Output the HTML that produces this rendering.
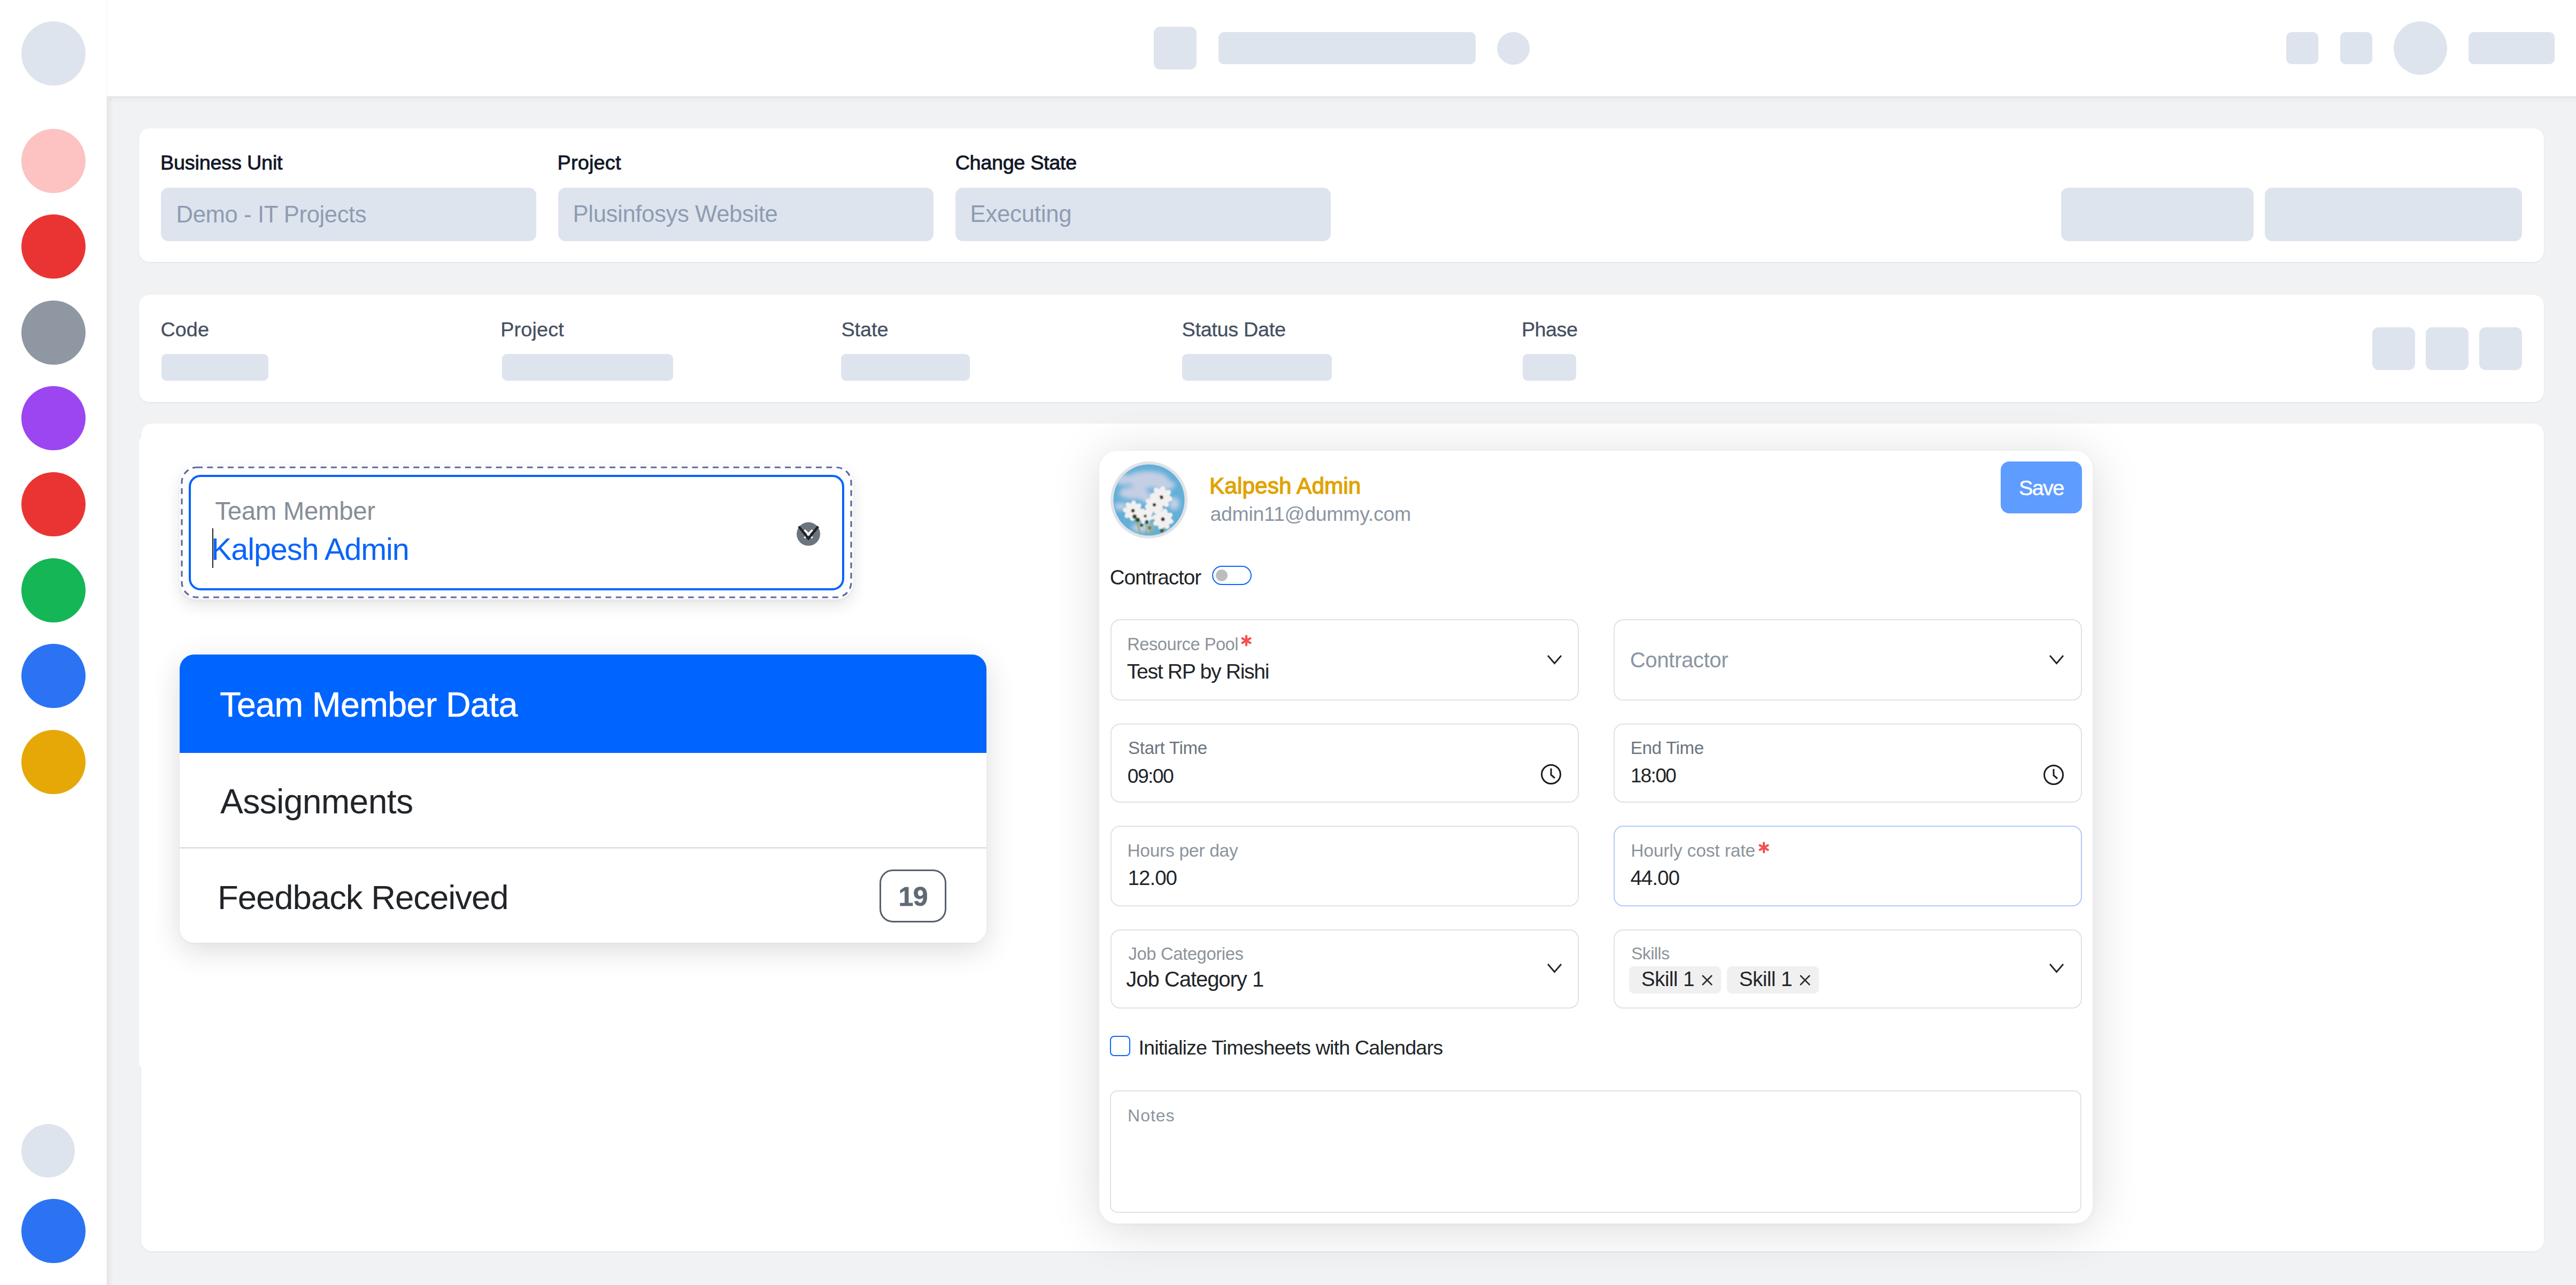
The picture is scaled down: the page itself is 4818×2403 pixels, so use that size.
<!DOCTYPE html>
<html><head><meta charset="utf-8"><title>Team Member</title>
<style>
html,body{margin:0;padding:0}
body{width:4818px;height:2403px;position:relative;overflow:hidden;background:#f1f2f4;font-family:"Liberation Sans",sans-serif}
.b{position:absolute;box-sizing:border-box}
.t{position:absolute;line-height:1;white-space:nowrap}
</style></head><body>
<div class="b" style="left:0px;top:0px;width:200px;height:2403px;background:#ffffff;border-radius:0px;border-right:1px solid #f4f4f5;"></div>
<div class="b" style="left:40px;top:40px;width:120px;height:120px;background:#dee4ed;border-radius:60px;"></div>
<div class="b" style="left:40px;top:240.5px;width:120px;height:120px;background:#fdc2c2;border-radius:60px;"></div>
<div class="b" style="left:40px;top:401.1px;width:120px;height:120px;background:#ea3434;border-radius:60px;"></div>
<div class="b" style="left:40px;top:561.7px;width:120px;height:120px;background:#8f97a3;border-radius:60px;"></div>
<div class="b" style="left:40px;top:722.3px;width:120px;height:120px;background:#9b46f1;border-radius:60px;"></div>
<div class="b" style="left:40px;top:882.9px;width:120px;height:120px;background:#ea3434;border-radius:60px;"></div>
<div class="b" style="left:40px;top:1043.5px;width:120px;height:120px;background:#14b655;border-radius:60px;"></div>
<div class="b" style="left:40px;top:1204.1px;width:120px;height:120px;background:#2b73f2;border-radius:60px;"></div>
<div class="b" style="left:40px;top:1364.7px;width:120px;height:120px;background:#e5a806;border-radius:60px;"></div>
<div class="b" style="left:40px;top:2102px;width:100px;height:100px;background:#dee4ed;border-radius:50px;"></div>
<div class="b" style="left:40px;top:2242px;width:120px;height:120px;background:#2b73f2;border-radius:60px;"></div>
<div class="b" style="left:200px;top:0px;width:4618px;height:180px;background:#ffffff;border-radius:0px;"></div>
<div class="b" style="left:200px;top:180px;width:4618px;height:3px;background:#e4e6ea;border-radius:0px;"></div>
<div class="b" style="left:200px;top:183px;width:4618px;height:9px;background:linear-gradient(rgba(0,0,0,0.03),rgba(0,0,0,0));border-radius:0px;"></div>
<div class="b" style="left:200px;top:180px;width:3px;height:2223px;background:#e4e6ea;border-radius:0px;"></div>
<div class="b" style="left:203px;top:183px;width:10px;height:2220px;background:linear-gradient(to right,rgba(0,0,0,0.03),rgba(0,0,0,0));border-radius:0px;"></div>
<div class="b" style="left:2158px;top:50px;width:80px;height:80px;background:#dee4ed;border-radius:12px;"></div>
<div class="b" style="left:2279px;top:60px;width:481px;height:60px;background:#dee4ed;border-radius:10px;"></div>
<div class="b" style="left:2800px;top:60px;width:61px;height:61px;background:#dee4ed;border-radius:30.5px;"></div>
<div class="b" style="left:4276px;top:60px;width:60px;height:60px;background:#dee4ed;border-radius:10px;"></div>
<div class="b" style="left:4377px;top:60px;width:60px;height:60px;background:#dee4ed;border-radius:10px;"></div>
<div class="b" style="left:4477px;top:40px;width:100px;height:100px;background:#dee4ed;border-radius:50px;"></div>
<div class="b" style="left:4617px;top:60px;width:161px;height:60px;background:#dee4ed;border-radius:10px;"></div>
<div class="b" style="left:260px;top:240px;width:4498px;height:250px;background:#ffffff;border-radius:20px;box-shadow:0 1px 3px rgba(0,0,0,0.06),0 1px 2px rgba(0,0,0,0.03);"></div>
<div class="b" style="left:301px;top:351px;width:702px;height:100px;background:#dee4ed;border-radius:14px;"></div>
<div class="b" style="left:1044px;top:351px;width:702px;height:100px;background:#dee4ed;border-radius:14px;"></div>
<div class="b" style="left:1787px;top:351px;width:702px;height:100px;background:#dee4ed;border-radius:14px;"></div>
<div class="b" style="left:3855px;top:351px;width:360px;height:100px;background:#dee4ed;border-radius:14px;"></div>
<div class="b" style="left:4236px;top:351px;width:481px;height:100px;background:#dee4ed;border-radius:14px;"></div>
<div class="b" style="left:260px;top:551px;width:4498px;height:201px;background:#ffffff;border-radius:20px;box-shadow:0 1px 3px rgba(0,0,0,0.06),0 1px 2px rgba(0,0,0,0.03);"></div>
<div class="b" style="left:302px;top:662px;width:200px;height:50px;background:#dee4ed;border-radius:9px;"></div>
<div class="b" style="left:939px;top:662px;width:320px;height:50px;background:#dee4ed;border-radius:9px;"></div>
<div class="b" style="left:1573px;top:662px;width:241px;height:50px;background:#dee4ed;border-radius:9px;"></div>
<div class="b" style="left:2211px;top:662px;width:280px;height:50px;background:#dee4ed;border-radius:9px;"></div>
<div class="b" style="left:2848px;top:662px;width:100px;height:50px;background:#dee4ed;border-radius:9px;"></div>
<div class="b" style="left:4437px;top:612px;width:80px;height:80px;background:#dee4ed;border-radius:12px;"></div>
<div class="b" style="left:4537px;top:612px;width:80px;height:80px;background:#dee4ed;border-radius:12px;"></div>
<div class="b" style="left:4637px;top:612px;width:80px;height:80px;background:#dee4ed;border-radius:12px;"></div>
<div class="b" style="left:263.5px;top:792px;width:4494.5px;height:1548px;background:#ffffff;border-radius:20px;box-shadow:0 1px 3px rgba(0,0,0,0.06),0 1px 2px rgba(0,0,0,0.03);"></div>
<div class="b" style="left:260px;top:814px;width:1700px;height:1186px;background:#ffffff;border-radius:14px;"></div>
<div class="b" style="left:336px;top:870px;width:1260px;height:251px;background:#ffffff;border-radius:32px;box-shadow:0 12px 28px rgba(0,0,0,0.10),0 2px 6px rgba(0,0,0,0.04);"></div>
<svg class="b" style="left:336px;top:870px" width="1260" height="251"><rect x="4" y="4" width="1252" height="243" rx="28" ry="28" fill="none" stroke="#5c69a2" stroke-width="3.2" stroke-dasharray="11 8.3"/></svg>
<div class="b" style="left:353px;top:888px;width:1226px;height:216px;background:transparent;border-radius:22px;border:4px solid #0064ff;box-sizing:border-box;"></div>
<div class="b" style="left:397px;top:988px;width:2px;height:74px;background:#222;border-radius:0px;"></div>
<svg class="b" style="left:1485px;top:972px" width="54" height="54" viewBox="0 0 54 54"><circle cx="27" cy="26.6" r="22" fill="#6c757d"/><path d="M19.5 19 L34.5 34 M34.5 19 L19.5 34" stroke="#fff" stroke-width="3.4"/><path d="M9 12.5 L27 35.2 L45.3 12.5" stroke="#1f2329" stroke-width="4.4" fill="none"/></svg>
<div class="b" style="left:336px;top:1224px;width:1509px;height:539px;background:#ffffff;border-radius:27px;box-shadow:0 14px 56px rgba(0,0,0,0.14),0 1px 4px rgba(0,0,0,0.04);overflow:hidden;"></div>
<div class="b" style="left:336px;top:1224px;width:1509px;height:184px;background:#0064ff;border-radius:0px;border-radius:27px 27px 0 0;"></div>
<div class="b" style="left:336px;top:1584px;width:1509px;height:3px;background:#dfe2e6;border-radius:0px;"></div>
<div class="b" style="left:1645px;top:1626px;width:125px;height:99px;background:transparent;border-radius:25px;border:3.5px solid #56606b;box-sizing:border-box;"></div>
<div class="b" style="left:2056px;top:843px;width:1858px;height:1445px;background:#ffffff;border-radius:34px;box-shadow:0 10px 90px rgba(0,0,0,0.15),0 2px 8px rgba(0,0,0,0.03);"></div>
<svg class="b" style="left:2076px;top:862px" width="146" height="146" viewBox="0 0 146 146"><defs><clipPath id="avc"><circle cx="73" cy="73" r="66.5"/></clipPath><filter id="blur3"><feGaussianBlur stdDeviation="4"/></filter><filter id="blur1"><feGaussianBlur stdDeviation="0.8"/></filter></defs><circle cx="73" cy="73" r="72" fill="#dfe3e7"/><g clip-path="url(#avc)"><rect width="146" height="146" fill="#63afd8"/><g filter="url(#blur3)" fill="#cfd3e6" opacity="0.9"><ellipse cx="70" cy="35" rx="40" ry="16"/><ellipse cx="45" cy="60" rx="28" ry="12"/><ellipse cx="100" cy="45" rx="22" ry="10"/><ellipse cx="25" cy="35" rx="15" ry="10"/><ellipse cx="80" cy="70" rx="25" ry="9"/><ellipse cx="20" cy="85" rx="12" ry="7"/><ellipse cx="120" cy="80" rx="10" ry="12"/><ellipse cx="60" cy="125" rx="20" ry="8"/></g><g filter="url(#blur1)"><path d="M46 104 L60 146 M52 110 L58 146 M69 114 L66 146 M83 82 L78 146 M98 70 L102 146 M74 125 L82 146" stroke="#9aa86a" stroke-width="1.6" fill="none"/><ellipse cx="106.3" cy="69.8" rx="10.9" ry="6.3" transform="rotate(10 106.3 69.8)" fill="#f2f0f1"/><ellipse cx="102.0" cy="76.6" rx="10.9" ry="6.3" transform="rotate(55 102.0 76.6)" fill="#f2f0f1"/><ellipse cx="94.2" cy="78.3" rx="10.9" ry="6.3" transform="rotate(100 94.2 78.3)" fill="#f2f0f1"/><ellipse cx="87.4" cy="74.0" rx="10.9" ry="6.3" transform="rotate(145 87.4 74.0)" fill="#f2f0f1"/><ellipse cx="85.7" cy="66.2" rx="10.9" ry="6.3" transform="rotate(190 85.7 66.2)" fill="#f2f0f1"/><ellipse cx="90.0" cy="59.4" rx="10.9" ry="6.3" transform="rotate(235 90.0 59.4)" fill="#f2f0f1"/><ellipse cx="97.8" cy="57.7" rx="10.9" ry="6.3" transform="rotate(280 97.8 57.7)" fill="#f2f0f1"/><ellipse cx="104.6" cy="62.0" rx="10.9" ry="6.3" transform="rotate(325 104.6 62.0)" fill="#f2f0f1"/><circle cx="96" cy="68" r="4.6" fill="#e9e3d0"/><circle cx="96" cy="68" r="3.6" fill="#27331a"/><ellipse cx="90.8" cy="86.5" rx="9.4" ry="5.4" transform="rotate(30 90.8 86.5)" fill="#f2f0f1"/><ellipse cx="85.3" cy="90.7" rx="9.4" ry="5.4" transform="rotate(75 85.3 90.7)" fill="#f2f0f1"/><ellipse cx="78.5" cy="89.8" rx="9.4" ry="5.4" transform="rotate(120 78.5 89.8)" fill="#f2f0f1"/><ellipse cx="74.3" cy="84.3" rx="9.4" ry="5.4" transform="rotate(165 74.3 84.3)" fill="#f2f0f1"/><ellipse cx="75.2" cy="77.5" rx="9.4" ry="5.4" transform="rotate(210 75.2 77.5)" fill="#f2f0f1"/><ellipse cx="80.7" cy="73.3" rx="9.4" ry="5.4" transform="rotate(255 80.7 73.3)" fill="#f2f0f1"/><ellipse cx="87.5" cy="74.2" rx="9.4" ry="5.4" transform="rotate(300 87.5 74.2)" fill="#f2f0f1"/><ellipse cx="91.7" cy="79.7" rx="9.4" ry="5.4" transform="rotate(345 91.7 79.7)" fill="#f2f0f1"/><circle cx="83" cy="82" r="4.0" fill="#e9e3d0"/><circle cx="83" cy="82" r="3.1" fill="#27331a"/><ellipse cx="52.5" cy="93.8" rx="9.9" ry="5.7" transform="rotate(5 52.5 93.8)" fill="#f2f0f1"/><ellipse cx="49.1" cy="100.3" rx="9.9" ry="5.7" transform="rotate(50 49.1 100.3)" fill="#f2f0f1"/><ellipse cx="42.2" cy="102.5" rx="9.9" ry="5.7" transform="rotate(95 42.2 102.5)" fill="#f2f0f1"/><ellipse cx="35.7" cy="99.1" rx="9.9" ry="5.7" transform="rotate(140 35.7 99.1)" fill="#f2f0f1"/><ellipse cx="33.5" cy="92.2" rx="9.9" ry="5.7" transform="rotate(185 33.5 92.2)" fill="#f2f0f1"/><ellipse cx="36.9" cy="85.7" rx="9.9" ry="5.7" transform="rotate(230 36.9 85.7)" fill="#f2f0f1"/><ellipse cx="43.8" cy="83.5" rx="9.9" ry="5.7" transform="rotate(275 43.8 83.5)" fill="#f2f0f1"/><ellipse cx="50.3" cy="86.9" rx="9.9" ry="5.7" transform="rotate(320 50.3 86.9)" fill="#f2f0f1"/><circle cx="43" cy="93" r="4.2" fill="#e9e3d0"/><circle cx="43" cy="93" r="3.2" fill="#27331a"/><ellipse cx="73.0" cy="105.6" rx="7.8" ry="4.5" transform="rotate(20 73.0 105.6)" fill="#f2f0f1"/><ellipse cx="69.2" cy="109.8" rx="7.8" ry="4.5" transform="rotate(65 69.2 109.8)" fill="#f2f0f1"/><ellipse cx="63.4" cy="110.0" rx="7.8" ry="4.5" transform="rotate(110 63.4 110.0)" fill="#f2f0f1"/><ellipse cx="59.2" cy="106.2" rx="7.8" ry="4.5" transform="rotate(155 59.2 106.2)" fill="#f2f0f1"/><ellipse cx="59.0" cy="100.4" rx="7.8" ry="4.5" transform="rotate(200 59.0 100.4)" fill="#f2f0f1"/><ellipse cx="62.8" cy="96.2" rx="7.8" ry="4.5" transform="rotate(245 62.8 96.2)" fill="#f2f0f1"/><ellipse cx="68.6" cy="96.0" rx="7.8" ry="4.5" transform="rotate(290 68.6 96.0)" fill="#f2f0f1"/><ellipse cx="72.8" cy="99.8" rx="7.8" ry="4.5" transform="rotate(335 72.8 99.8)" fill="#f2f0f1"/><circle cx="66" cy="103" r="3.3" fill="#e9e3d0"/><circle cx="66" cy="103" r="2.6" fill="#27331a"/><ellipse cx="108.7" cy="111.6" rx="10.4" ry="6.0" transform="rotate(15 108.7 111.6)" fill="#f2f0f1"/><ellipse cx="104.0" cy="117.7" rx="10.4" ry="6.0" transform="rotate(60 104.0 117.7)" fill="#f2f0f1"/><ellipse cx="96.4" cy="118.7" rx="10.4" ry="6.0" transform="rotate(105 96.4 118.7)" fill="#f2f0f1"/><ellipse cx="90.3" cy="114.0" rx="10.4" ry="6.0" transform="rotate(150 90.3 114.0)" fill="#f2f0f1"/><ellipse cx="89.3" cy="106.4" rx="10.4" ry="6.0" transform="rotate(195 89.3 106.4)" fill="#f2f0f1"/><ellipse cx="94.0" cy="100.3" rx="10.4" ry="6.0" transform="rotate(240 94.0 100.3)" fill="#f2f0f1"/><ellipse cx="101.6" cy="99.3" rx="10.4" ry="6.0" transform="rotate(285 101.6 99.3)" fill="#f2f0f1"/><ellipse cx="107.7" cy="104.0" rx="10.4" ry="6.0" transform="rotate(330 107.7 104.0)" fill="#f2f0f1"/><circle cx="99" cy="109" r="4.4" fill="#e9e3d0"/><circle cx="99" cy="109" r="3.4" fill="#27331a"/><circle cx="46" cy="104" r="4" fill="#2f4a1c"/><circle cx="52" cy="110" r="4" fill="#2f4a1c"/><circle cx="69" cy="114" r="3.5" fill="#2f4a1c"/><circle cx="59" cy="120" r="3" fill="#3a5a22"/><circle cx="74" cy="125" r="3.5" fill="#8a7a2a"/><circle cx="97" cy="130" r="3.5" fill="#3a5a22"/></g></g></svg>
<div class="b" style="left:3742px;top:863px;width:152px;height:97px;background:#5e9cff;border-radius:16px;"></div>
<div class="b" style="left:2267px;top:1058px;width:74px;height:36px;background:transparent;border-radius:18px;border:2.6px solid #0a66ff;box-sizing:border-box;"></div>
<div class="b" style="left:2274px;top:1065px;width:22.4px;height:22.4px;background:#bdbdbd;border-radius:11.2px;"></div>
<div class="b" style="left:2077px;top:1158px;width:876px;height:152px;background:#ffffff;border-radius:18px;border:2.5px solid #dfe2e6;box-sizing:border-box;"></div>
<div class="b" style="left:3018px;top:1158px;width:876px;height:152px;background:#ffffff;border-radius:18px;border:2.5px solid #dfe2e6;box-sizing:border-box;"></div>
<div class="b" style="left:2077px;top:1353px;width:876px;height:148px;background:#ffffff;border-radius:18px;border:2.5px solid #dfe2e6;box-sizing:border-box;"></div>
<div class="b" style="left:3018px;top:1353px;width:876px;height:148px;background:#ffffff;border-radius:18px;border:2.5px solid #dfe2e6;box-sizing:border-box;"></div>
<div class="b" style="left:2077px;top:1544px;width:876px;height:151px;background:#ffffff;border-radius:18px;border:2.5px solid #dfe2e6;box-sizing:border-box;"></div>
<div class="b" style="left:3018px;top:1544px;width:876px;height:151px;background:#ffffff;border-radius:18px;border:2.5px solid #aecbfa;box-sizing:border-box;"></div>
<div class="b" style="left:2077px;top:1738px;width:876px;height:148px;background:#ffffff;border-radius:18px;border:2.5px solid #dfe2e6;box-sizing:border-box;"></div>
<div class="b" style="left:3018px;top:1738px;width:876px;height:148px;background:#ffffff;border-radius:18px;border:2.5px solid #dfe2e6;box-sizing:border-box;"></div>
<svg class="b" style="left:2893px;top:1223px" width="30" height="22" viewBox="0 0 30 22"><path d="M2 3 L14.5 17.5 L27 3" stroke="#1f2329" stroke-width="2.8" fill="none"/></svg>
<svg class="b" style="left:3832px;top:1223px" width="30" height="22" viewBox="0 0 30 22"><path d="M2 3 L14.5 17.5 L27 3" stroke="#1f2329" stroke-width="2.8" fill="none"/></svg>
<svg class="b" style="left:2893px;top:1800px" width="30" height="22" viewBox="0 0 30 22"><path d="M2 3 L14.5 17.5 L27 3" stroke="#1f2329" stroke-width="2.8" fill="none"/></svg>
<svg class="b" style="left:3832px;top:1800px" width="30" height="22" viewBox="0 0 30 22"><path d="M2 3 L14.5 17.5 L27 3" stroke="#1f2329" stroke-width="2.8" fill="none"/></svg>
<svg class="b" style="left:2880px;top:1427px" width="42" height="42" viewBox="0 0 42 42"><circle cx="21" cy="21" r="17.5" stroke="#1a1d21" stroke-width="3" fill="none"/><path d="M21 10 L21 22 L28 28" stroke="#1a1d21" stroke-width="3" fill="none"/></svg>
<svg class="b" style="left:3820px;top:1428px" width="42" height="42" viewBox="0 0 42 42"><circle cx="21" cy="21" r="17.5" stroke="#1a1d21" stroke-width="3" fill="none"/><path d="M21 10 L21 22 L28 28" stroke="#1a1d21" stroke-width="3" fill="none"/></svg>
<svg class="b" style="left:2319.0px;top:1186.0px" width="24" height="24" viewBox="-12 -12 24 24"><path d="M0 -8.6 L0 8.6 M-7.45 -4.3 L7.45 4.3 M-7.45 4.3 L7.45 -4.3" stroke="#f55050" stroke-width="4.2" stroke-linecap="round"/></svg>
<svg class="b" style="left:3286.5px;top:1572.7px" width="24" height="24" viewBox="-12 -12 24 24"><path d="M0 -8.6 L0 8.6 M-7.45 -4.3 L7.45 4.3 M-7.45 4.3 L7.45 -4.3" stroke="#f55050" stroke-width="4.2" stroke-linecap="round"/></svg>
<div class="b" style="left:3047px;top:1807px;width:172px;height:51px;background:#f0f0f0;border-radius:9px;"></div>
<div class="b" style="left:3230px;top:1807px;width:172px;height:51px;background:#f0f0f0;border-radius:9px;"></div>
<svg class="b" style="left:3181.6px;top:1822px" width="22" height="22" viewBox="0 0 22 22"><path d="M2 2 L20 20 M20 2 L2 20" stroke="#2a2e33" stroke-width="2.6"/></svg>
<svg class="b" style="left:3364.8px;top:1822px" width="22" height="22" viewBox="0 0 22 22"><path d="M2 2 L20 20 M20 2 L2 20" stroke="#2a2e33" stroke-width="2.6"/></svg>
<div class="b" style="left:2076px;top:1937px;width:37.5px;height:37.5px;background:transparent;border-radius:8px;border:2.6px solid #0a66ff;box-sizing:border-box;"></div>
<div class="b" style="left:2076px;top:2039px;width:1817px;height:229px;background:#ffffff;border-radius:14px;border:2.5px solid #dfe2e6;box-sizing:border-box;"></div>
<div class="t" id="bu_l" style="left:299.97px;top:286.00px;font-size:37.79px;letter-spacing:-0.198px;color:#111827;font-weight:400;-webkit-text-stroke:0.85px #111827;">Business Unit</div>
<div class="t" id="pr_l" style="left:1042.47px;top:286.00px;font-size:37.79px;letter-spacing:0.226px;color:#111827;font-weight:400;-webkit-text-stroke:0.85px #111827;">Project</div>
<div class="t" id="cs_l" style="left:1786.65px;top:286.00px;font-size:37.79px;letter-spacing:-0.333px;color:#111827;font-weight:400;-webkit-text-stroke:0.85px #111827;">Change State</div>
<div class="t" id="bu_v" style="left:329.59px;top:379.58px;font-size:43.61px;letter-spacing:-0.393px;color:#8d9cb3;font-weight:400;">Demo - IT Projects</div>
<div class="t" id="pr_v" style="left:1071.59px;top:378.58px;font-size:43.61px;letter-spacing:-0.345px;color:#8d9cb3;font-weight:400;">Plusinfosys Website</div>
<div class="t" id="cs_v" style="left:1814.59px;top:379.08px;font-size:43.61px;letter-spacing:-0.205px;color:#8d9cb3;font-weight:400;">Executing</div>
<div class="t" id="code_l" style="left:300.40px;top:598.00px;font-size:37.79px;letter-spacing:0.070px;color:#465061;font-weight:400;-webkit-text-stroke:0.35px #465061;">Code</div>
<div class="t" id="proj_l" style="left:936.22px;top:598.00px;font-size:37.79px;letter-spacing:0.143px;color:#465061;font-weight:400;-webkit-text-stroke:0.35px #465061;">Project</div>
<div class="t" id="state_l" style="left:1573.49px;top:598.00px;font-size:37.79px;letter-spacing:-0.069px;color:#465061;font-weight:400;-webkit-text-stroke:0.35px #465061;">State</div>
<div class="t" id="sd_l" style="left:2210.59px;top:598.00px;font-size:37.79px;letter-spacing:-0.310px;color:#465061;font-weight:400;-webkit-text-stroke:0.35px #465061;">Status Date</div>
<div class="t" id="ph_l" style="left:2845.92px;top:598.00px;font-size:37.79px;letter-spacing:-0.505px;color:#465061;font-weight:400;-webkit-text-stroke:0.35px #465061;">Phase</div>
<div class="t" id="tm_l" style="left:402.26px;top:932.43px;font-size:47.45px;letter-spacing:-0.326px;color:#868e96;font-weight:400;">Team Member</div>
<div class="t" id="tm_v" style="left:395.11px;top:999.30px;font-size:57.52px;letter-spacing:-1.098px;color:#0a64f8;font-weight:400;">Kalpesh Admin</div>
<div class="t" id="lg1" style="left:411.29px;top:1286.46px;font-size:64.41px;letter-spacing:-0.573px;color:#ffffff;font-weight:400;-webkit-text-stroke:0.6px #ffffff;">Team Member Data</div>
<div class="t" id="lg2" style="left:412.00px;top:1466.63px;font-size:64.22px;letter-spacing:-0.663px;color:#212529;font-weight:400;">Assignments</div>
<div class="t" id="lg3" style="left:407.04px;top:1647.27px;font-size:63.47px;letter-spacing:-1.025px;color:#212529;font-weight:400;">Feedback Received</div>
<div class="t" id="badge" style="left:1680.56px;top:1652.43px;font-size:50.17px;letter-spacing:-0.715px;color:#5f6a75;font-weight:700;-webkit-text-stroke:0.6px #5f6a75;">19</div>
<div class="t" id="fc_name" style="left:2262.01px;top:887.51px;font-size:42.15px;letter-spacing:0.179px;color:#e0a300;font-weight:400;-webkit-text-stroke:1.4px #e0a300;">Kalpesh Admin</div>
<div class="t" id="fc_mail" style="left:2263.43px;top:942.73px;font-size:37.41px;letter-spacing:-0.238px;color:#8a95a2;font-weight:400;">admin11@dummy.com</div>
<div class="t" id="save" style="left:3776.01px;top:893.39px;font-size:39.69px;letter-spacing:-1.705px;color:#ffffff;font-weight:400;-webkit-text-stroke:0.5px #ffffff;">Save</div>
<div class="t" id="contr" style="left:2075.69px;top:1061.26px;font-size:38.67px;letter-spacing:-0.990px;color:#212529;font-weight:400;">Contractor</div>
<div class="t" id="rp_l" style="left:2108.26px;top:1189.12px;font-size:32.57px;letter-spacing:-0.446px;color:#8c939b;font-weight:400;">Resource Pool</div>
<div class="t" id="rp_v" style="left:2107.69px;top:1235.81px;font-size:39.20px;letter-spacing:-1.329px;color:#212529;font-weight:400;">Test RP by Rishi</div>
<div class="t" id="co_p" style="left:3048.63px;top:1214.56px;font-size:39.97px;letter-spacing:-0.293px;color:#8a95a2;font-weight:400;">Contractor</div>
<div class="t" id="st_l" style="left:2109.97px;top:1383.09px;font-size:32.97px;letter-spacing:-0.228px;color:#6b747d;font-weight:400;">Start Time</div>
<div class="t" id="st_v" style="left:2108.83px;top:1432.93px;font-size:37.29px;letter-spacing:-1.606px;color:#212529;font-weight:400;">09:00</div>
<div class="t" id="et_l" style="left:3049.83px;top:1383.09px;font-size:32.96px;letter-spacing:-0.273px;color:#6b747d;font-weight:400;">End Time</div>
<div class="t" id="et_v" style="left:3049.68px;top:1432.40px;font-size:37.09px;letter-spacing:-1.692px;color:#212529;font-weight:400;">18:00</div>
<div class="t" id="hp_l" style="left:2108.39px;top:1573.59px;font-size:33.43px;letter-spacing:-0.221px;color:#8c939b;font-weight:400;">Hours per day</div>
<div class="t" id="hp_v" style="left:2109.60px;top:1623.14px;font-size:38.45px;letter-spacing:-0.965px;color:#212529;font-weight:400;">12.00</div>
<div class="t" id="hc_l" style="left:3050.19px;top:1573.69px;font-size:33.43px;letter-spacing:-0.075px;color:#8c939b;font-weight:400;">Hourly cost rate</div>
<div class="t" id="hc_v" style="left:3049.40px;top:1623.10px;font-size:38.51px;letter-spacing:-0.951px;color:#212529;font-weight:400;">44.00</div>
<div class="t" id="jc_l" style="left:2110.49px;top:1768.29px;font-size:32.73px;letter-spacing:-0.354px;color:#8c939b;font-weight:400;">Job Categories</div>
<div class="t" id="jc_v" style="left:2106.37px;top:1811.41px;font-size:40.02px;letter-spacing:-1.045px;color:#212529;font-weight:400;">Job Category 1</div>
<div class="t" id="sk_l" style="left:3051.00px;top:1767.22px;font-size:32.10px;letter-spacing:-0.580px;color:#8c939b;font-weight:400;">Skills</div>
<div class="t" id="sk1" style="left:3069.79px;top:1812.14px;font-size:38.58px;letter-spacing:-0.523px;color:#212529;font-weight:400;">Skill 1</div>
<div class="t" id="sk2" style="left:3252.79px;top:1812.14px;font-size:38.58px;letter-spacing:-0.523px;color:#212529;font-weight:400;">Skill 1</div>
<div class="t" id="init" style="left:2129.45px;top:1940.51px;font-size:37.78px;letter-spacing:-0.877px;color:#212529;font-weight:400;">Initialize Timesheets with Calendars</div>
<div class="t" id="notes" style="left:2109.10px;top:2069.63px;font-size:31.98px;letter-spacing:0.991px;color:#8c939b;font-weight:400;">Notes</div>
</body></html>
